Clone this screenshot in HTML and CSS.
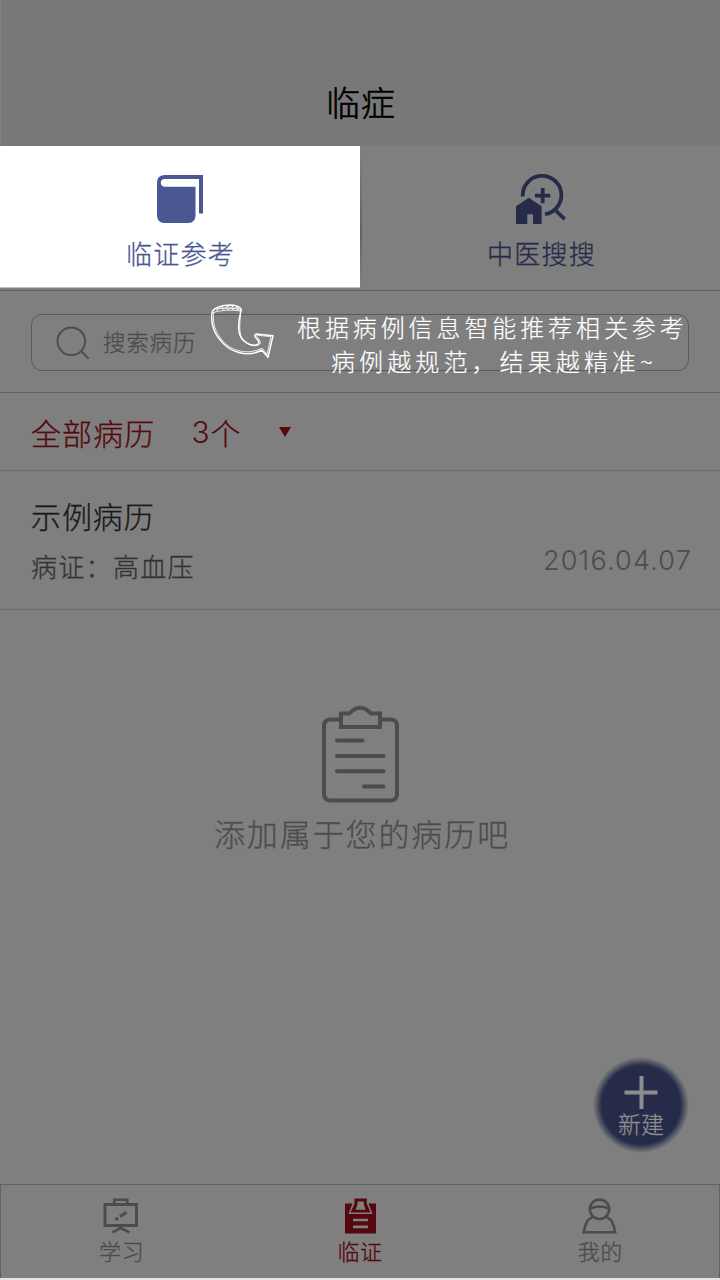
FILE: index.html
```html
<!DOCTYPE html>
<html lang="zh-CN">
<head>
<meta charset="utf-8">
<title>临症</title>
<link rel="stylesheet" href="styles.css">
</head>
<body>
<div class="app">
  <header class="header"><h1 class="title">临症</h1></header>
  <nav class="modes">
    <a class="mode mode-active">
      <svg class="mode-icon" viewBox="0 0 52 52"><path fill="currentColor" fill-rule="evenodd" d="M10 1H49V39.500H45V5H10Q6.800 5.400 6.800 8.800Q6.800 12.400 10.500 12.700H41.500V42Q41 48.500 34.500 49H10Q3.500 48.500 3 42V8Q3.500 1.500 10 1Z"/></svg>
      <span>临证参考</span>
    </a>
    <a class="mode">
      <svg class="mode-icon" viewBox="0 0 52 52"><g fill="none" stroke="currentColor" stroke-width="3.800"><path d="M8.800 22.500A19.300 19.300 0 1 1 31 40.200"/><path d="M41.200 36L50.700 45.200"/><path d="M21 21.700H36.300M28.700 14V29.300"/></g><path fill="currentColor" d="M2 32.300L14.800 23.700L27.600 32.300V50H19V40.300H13.300V50H2Z"/></svg>
      <span>中医搜搜</span>
    </a>
  </nav>
  <section class="search-row">
    <div class="search">
      <svg class="search-icon" viewBox="0 0 34 34"><g fill="none" stroke="currentColor" stroke-width="1.900"><circle cx="15.300" cy="15.300" r="13.800"/><path d="M25 25L32.700 32.700"/></g></svg>
      <span>搜索病历</span>
    </div>
    <div class="hint">
      <svg class="hint-arrow" viewBox="30 54 192 168"><g fill="none" stroke="currentColor" stroke-linejoin="round" stroke-linecap="round"><path stroke-width="4.500" d="M37 80C31 103 38 139 59 163C87 201 141 220 185 195L204 217L219 152L169 147Q160 150 169 160Q181 172 174 177C158 188 121 171 117 139C113 113 119 94 124 73Q115 60 90 60Q52 61 38 77"/><path stroke-width="2.500" d="M41 81C38 112 43 132 57 152C82 195 136 212 180 192L187 190L201 208L213 155L174 151Q166 149 176 162Q189 178 170 182C145 184 124 166 121 145C116 113 124 94 121 77M42 82Q75 71 124 78M38 77L52 66L50 76L67 64L68 73L85 63L83 74L99 63L98 74L112 66L111 75L122 72M53 70L115 70"/></g></svg>
      <div class="hint-line hint-first">根据病例信息智能推荐相关参考</div>
      <div class="hint-line hint-second">病例越规范，结果越精准~</div>
    </div>
  </section>
  <section class="filter"><span>全部病历</span><span class="count"><span class="digit">3</span><span>个</span></span><i class="caret"></i></section>
  <section class="record">
    <div class="record-main">
      <div class="record-name">示例病历</div>
      <div class="record-note">病证：高血压</div>
    </div>
    <time class="date">2016.04.07</time>
  </section>
  <main class="empty">
    <svg class="clipboard" viewBox="0 0 78 98"><g fill="none" stroke="currentColor" stroke-width="4"><path d="M18 14.500H8Q2 15 2 21V89Q2 95 8 95.500H69Q75 95 75 89V21Q75 15 69 14.500H58"/><path d="M19 8.500H27.500Q38-3 49 8.500H58V22H19Z"/><path stroke-linecap="round" d="M15 35.600H40.500M15 51H61.500M15 66.300H61.500M42 81.600H61.500"/></g></svg>
    <p class="empty-text">添加属于您的病历吧</p>
    <button class="create"><svg class="plus" viewBox="0 0 34 34"><path fill="none" stroke="currentColor" stroke-width="4" d="M.5 17.500H33.500M17.500 1V34"/></svg><span>新建</span></button>
  </main>
  <footer class="tabs">
    <a class="tab">
      <svg class="tab-icon" viewBox="0 0 36 36"><g fill="none" stroke="currentColor" stroke-width="3"><path d="M2 6.500H33.500V27.500H2Z"/><path stroke-width="2.600" d="M11.300 6V1.800H24.200V6M17.700 28V30L9.500 34.300M17.700 30L26.500 34.300"/><path d="M17 18.600L23.500 14.200M12.300 21.800L15 20"/></g></svg>
      <span>学习</span>
    </a>
    <a class="tab tab-active">
      <svg class="tab-icon" viewBox="0 0 36 36"><path fill="currentColor" fill-rule="evenodd" d="M3 5.500H10.500L6.500 16H30.500L26.500 5.500H34V35.500H3ZM11 20.800V23.300H26V20.800ZM11 27.500V30.200H26V27.500ZM12.500 .5H24.800V5.500L28.500 14.500H8.500L12.500 5.500ZM15.500 3.500V6.500L13.500 11.800H23.500L21.800 6.500V3.500Z"/></svg>
      <span>临证</span>
    </a>
    <a class="tab">
      <svg class="tab-icon" viewBox="0 0 36 36"><g fill="none" stroke="currentColor" stroke-width="2.600"><circle cx="18.500" cy="11.300" r="9.700"/><path d="M9 10.500Q18.500 6.500 28 10.500M12 18.500L6.500 22.500Q4 28 2.600 34.200H34.200Q33 28 30.500 22.500L25 18.500"/></g></svg>
      <span>我的</span>
    </a>
  </footer>
</div>
</body>
</html>
```
FILE: styles.css
```css
* { box-sizing: border-box; }
body { margin: 0; background: #7f7f7f; }
.app {
  width: 720px; height: 1280px; display: flex; flex-direction: column;
  font-family: "Noto Sans CJK SC", sans-serif; font-weight: 300;
  -webkit-text-stroke: .3px currentColor;
  background: #7f7f7f; border-bottom: 2px solid #e6e6e6; overflow: hidden;
}
.header { flex: 0 0 146px; padding-top: 81px; background: #787878; border-left: 1px solid #808080; }
.title { margin: 0; padding-left: 1px; font-size: 34px; font-weight: 300; -webkit-text-stroke-width: .6px; line-height: 42px; letter-spacing: 1px; text-align: center; color: #000; }
.modes { flex: 0 0 145px; display: grid; grid-template-columns: 1fr 1fr; border-bottom: 1px solid #626262; }
.mode {
  display: flex; flex-direction: column; align-items: center; padding-top: 28px;
  color: #252b49; font-size: 26px; line-height: 38px; letter-spacing: 1.2px;
}
.mode span { padding-left: 1px; }
.mode + .mode { border-left: 2px solid; padding-right: 2px; border-image: linear-gradient(#7f7f7f 5%, #626262 60%, #7f7f7f 95%) 1; }
.mode + .mode span { padding-left: 3px; }
.mode-active { height: 142px; background: #fff; color: #4a5792; border-bottom: 1px solid #bfbfbf; }
.mode-icon { width: 52px; height: 52px; margin-bottom: 8px; }
.search-row { flex: 0 0 102px; position: relative; padding: 23px 31px 0; border-bottom: 1px solid #626262; }
.search {
  height: 57px; border: 1px solid #5a5a5a; border-radius: 11px;
  display: flex; align-items: center; gap: 13px; padding-left: 24px;
  color: #4c4c4c; font-size: 22.500px; letter-spacing: .8px;
}
.search span { line-height: 34px; margin-top: -3px; }
.search-icon { width: 34px; height: 34px; }
.hint { position: absolute; left: 210px; top: 12px; width: 500px; height: 76px; color: #fff; }
.hint-arrow { position: absolute; left: 0; top: 0; width: 64px; height: 56px; }
.hint-line {
  position: absolute; white-space: nowrap; line-height: 34px; font-size: 24px; letter-spacing: 3.900px;
  font-family: "KaiTi", "STKaiti", "Noto Sans CJK SC", cursive; font-weight: 300;
  -webkit-text-stroke-width: .2px;
}
.hint-first { left: 87px; top: 7px; }
.hint-second { left: 121px; top: 41px; letter-spacing: 4.100px; }
.filter {
  flex: 0 0 78px; display: flex; align-items: center; padding: 0 0 0 31px;
  border-bottom: 1px solid #6d6d6d; color: #56080e; font-size: 30px; line-height: 44px; letter-spacing: 1.1px;
}
.count { display: flex; margin-left: 36px; }
.digit { font-family: Inter, sans-serif; font-size: 30px; letter-spacing: .8px; -webkit-text-stroke-width: 0; }
.caret { margin-left: 37px; border: 6px solid transparent; border-top: 10px solid #56080e; border-bottom: 0; }
.record { flex: 0 0 139px; display: flex; justify-content: space-between; padding: 22px 28px 0 31px; border-bottom: 1px solid #6d6d6d; }
.record-name { font-size: 30px; line-height: 44px; letter-spacing: .9px; color: #191919; }
.record-note { margin-top: 10px; font-size: 26px; line-height: 38px; letter-spacing: 1.300px; color: #333; }
.date { margin-top: 48px; font-family: Inter, sans-serif; font-size: 27px; line-height: 40px; letter-spacing: 1.200px; color: #4c4c4c; -webkit-text-stroke-width: 0; }
.empty { flex: 1; position: relative; display: flex; flex-direction: column; align-items: center; padding: 95px 0 0 1px; color: #4c4c4c; }
.clipboard { width: 78px; height: 98px; }
.empty-text { margin: 8px 0 0; padding-left: 3px; font-size: 31px; line-height: 44px; letter-spacing: 1.900px; }
.create {
  position: absolute; left: 593px; top: 447px; width: 96px; height: 96px; border: 0; border-radius: 50%;
  padding: 18px 0 0; display: flex; flex-direction: column; align-items: center;
  background: radial-gradient(circle closest-side, #252b49 82%, #7f7f7f 100%);
  color: #8d8d8d; font: 300 23px/28px "Noto Sans CJK SC", sans-serif;
}
.plus { width: 34px; height: 34px; }
.tabs { flex: 0 0 94px; display: grid; grid-template-columns: repeat(3, 1fr); border: 1px solid #626262; border-bottom: 0; }
.tab { display: flex; flex-direction: column; align-items: center; padding-top: 13px; color: #4c4c4c; font-size: 22px; line-height: 32px; letter-spacing: .6px; }
.tab span { padding-left: 2px; }
.tab-active { color: #56080e; }
.tab-active span { padding-left: 0; }
.tab-icon { width: 36px; height: 36px; }
```
